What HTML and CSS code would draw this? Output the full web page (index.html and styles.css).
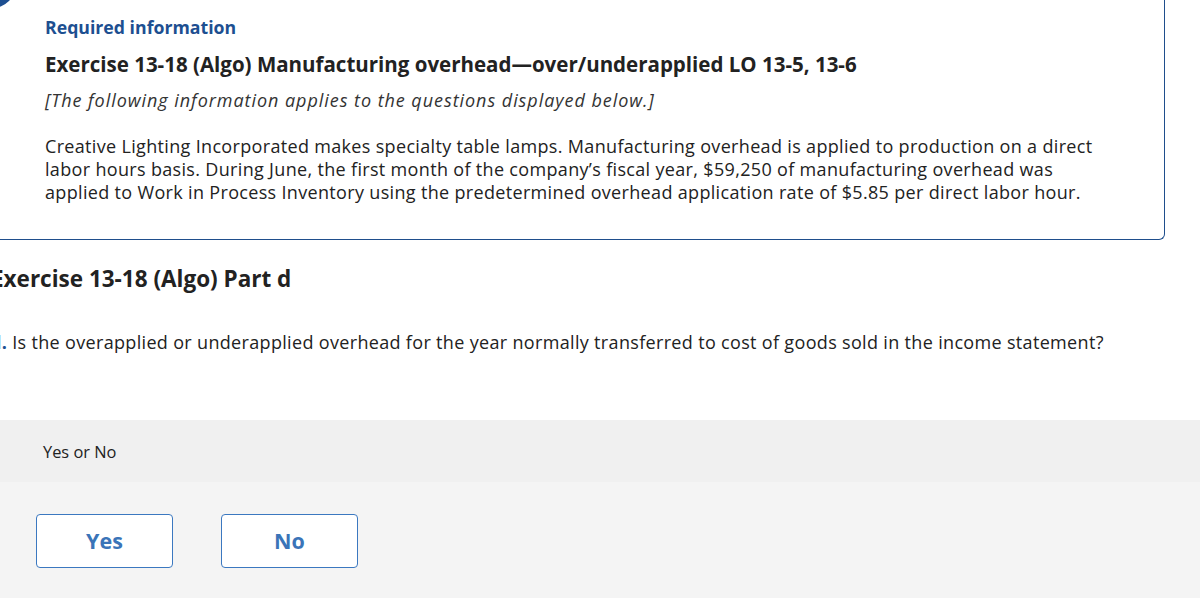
FILE: index.html
```html
<!DOCTYPE html>
<html>
<head>
<meta charset="utf-8">
<link rel="stylesheet" href="styles.css">
</head>
<body>
<div class="page">
  <div class="badge"></div>
  <div class="card">
    <div class="req">Required information</div>
    <div class="title">Exercise 13-18 (Algo) Manufacturing overhead—over/underapplied LO 13-5, 13-6</div>
    <div class="note">[The following information applies to the questions displayed below.]</div>
    <p class="body">Creative Lighting Incorporated makes specialty table lamps. Manufacturing overhead is applied to production on a direct labor hours basis. During June, the first month of the company’s fiscal year, $59,250 of manufacturing overhead was applied to Work in Process Inventory using the predetermined overhead application rate of $5.85 per direct labor hour.</p>
  </div>
  <h2 class="part">Exercise 13-18 (Algo) Part d</h2>
  <p class="question"><span class="qnum">d.</span> Is the overapplied or underapplied overhead for the year normally transferred to cost of goods sold in the income statement?</p>
  <div class="label-bar">Yes or No</div>
  <div class="choices">
    <button class="choice">Yes</button>
    <button class="choice">No</button>
  </div>
</div>
</body>
</html>
```
FILE: styles.css
```css
html, body {
  margin: 0;
  padding: 0;
  background: #ffffff;
  overflow: hidden;
  height: 598px;
}
body {
  font-family: "Open Sans", Lato, Arial, sans-serif;
  color: #222222;
}
.page {
  position: relative;
  width: 1200px;
}
.badge {
  position: absolute;
  left: -32px;
  top: -40px;
  width: 48px;
  height: 48px;
  border-radius: 50%;
  background: #1d4f91;
}
.card {
  margin-left: -10px;
  width: 1175px;
  box-sizing: border-box;
  border: 1px solid #1f4e8c;
  border-top: none;
  border-radius: 0 0 6px 6px;
  padding: 14px 64px 0 54px;
  height: 240px;
}
.req {
  font-size: 17.7px;
  font-weight: 700;
  color: #1d4f91;
  line-height: 26px;
}
.title {
  margin-top: 10px;
  font-size: 20.5px;
  font-weight: 700;
  color: #222222;
  line-height: 28px;
}
.note {
  margin-top: 10px;
  font-size: 18px;
  font-style: italic;
  color: #333333;
  line-height: 24px;
  letter-spacing: 0.95px;
}
.body {
  margin: 23px 0 0 0;
  font-size: 18px;
  line-height: 23px;
  color: #222222;
  letter-spacing: 0.33px;
}
.part {
  margin: 24px 0 0 -9px;
  font-size: 22.5px;
  font-weight: 700;
  line-height: 30px;
  color: #222222;
}
.question {
  margin: 36px 0 0 -10px;
  font-size: 18px;
  line-height: 24px;
  color: #222222;
  letter-spacing: 0.33px;
}
.qnum {
  font-weight: 700;
  color: #1d4f91;
}
.label-bar {
  margin-top: 66px;
  height: 62px;
  background: #f0f0f0;
  display: flex;
  align-items: center;
  padding-left: 43px;
  font-size: 16.4px;
  color: #222222;
}
.choices {
  background: #f4f4f4;
  height: 120px;
  display: flex;
  gap: 48px;
  padding: 32px 0 0 36px;
  box-sizing: border-box;
}
.choice {
  width: 137px;
  height: 54px;
  box-sizing: border-box;
  background: #ffffff;
  border: 1px solid #3b78c0;
  border-radius: 4px;
  font-family: "Open Sans", Lato, Arial, sans-serif;
  font-size: 21.5px;
  font-weight: 700;
  color: #3a74b8;
  padding: 0 0 2px 0;
}
```
